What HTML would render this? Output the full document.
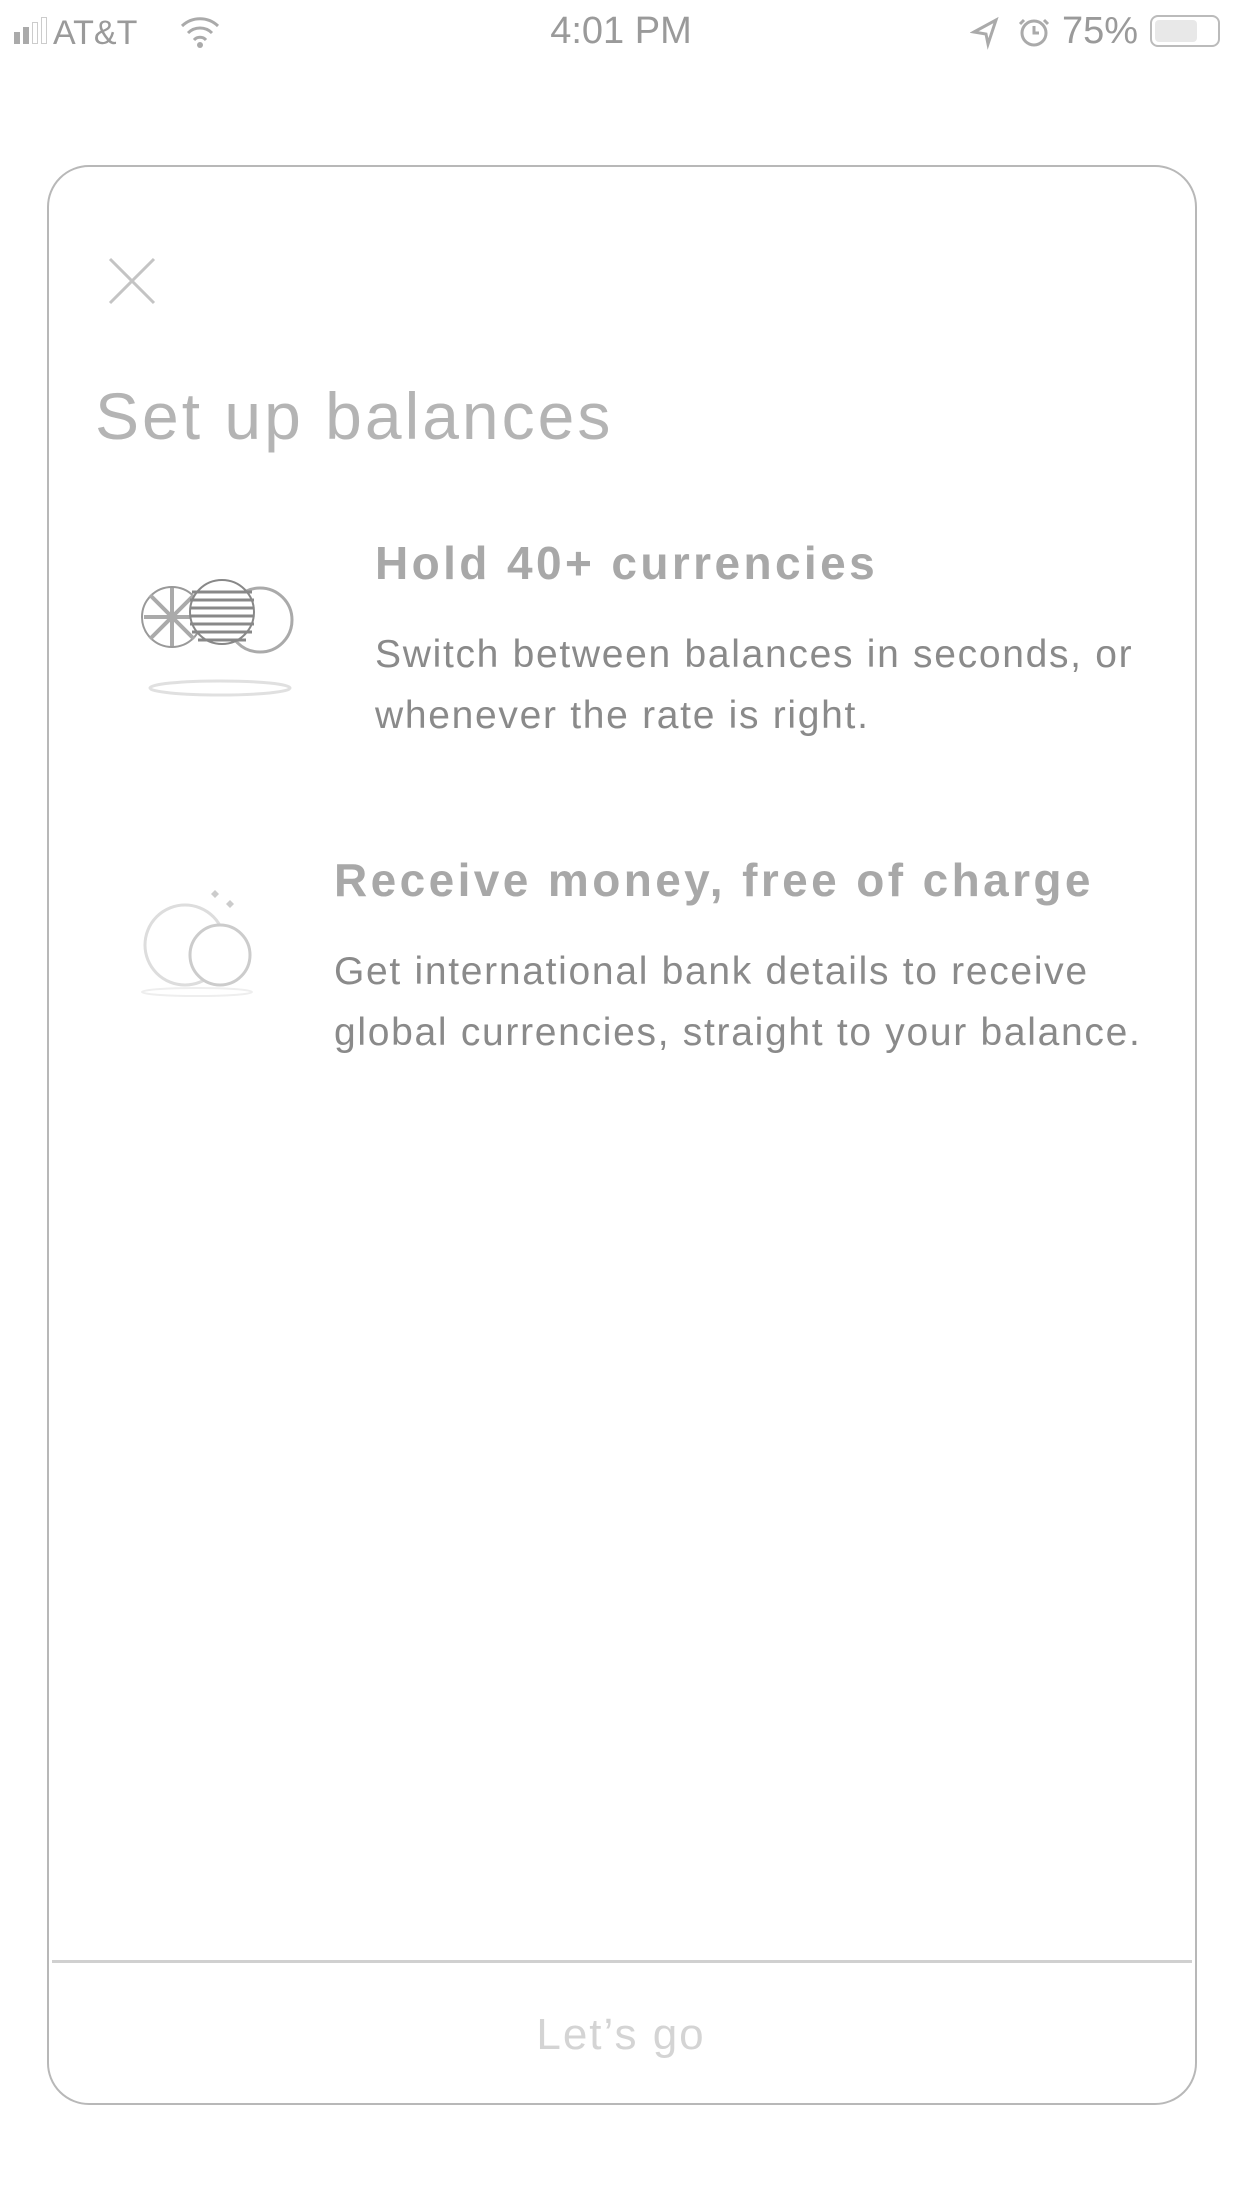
<!DOCTYPE html>
<html><head><meta charset="utf-8"><style>
body{margin:0;width:1242px;height:2208px;background:#fff;position:relative;overflow:hidden;font-family:"Liberation Sans",sans-serif;}
.a{position:absolute;white-space:nowrap;}
.card{position:absolute;left:47px;top:165px;width:1150px;height:1940px;border:2px solid #b8b8b8;border-radius:42px;box-sizing:border-box;}
.div{position:absolute;left:52px;top:1960px;width:1140px;height:3px;background:#d0d0d0;}
.h{font-weight:bold;font-size:46px;letter-spacing:3.4px;color:#a8a8a8;}
.d{font-size:39px;letter-spacing:1.7px;color:#8a8a8a;line-height:61px;}
</style></head><body>
<div class="a" style="left:14px;top:14px;font-size:34px;color:#9a9a9a;">
<span style="display:inline-block;width:6px;height:12px;background:#aaa;margin-right:3px"></span><span style="display:inline-block;width:6px;height:17px;background:#aaa;margin-right:3px"></span><span style="display:inline-block;width:6px;height:22px;border:1px solid #ccc;margin-right:3px;box-sizing:border-box"></span><span style="display:inline-block;width:6px;height:27px;border:1px solid #ccc;box-sizing:border-box;margin-right:6px"></span>AT&amp;T</div>
<svg class="a" style="left:178px;top:14px" width="44" height="36" viewBox="0 0 44 36"><path d="M4 12 A26 26 0 0 1 40 12 M10 19 A17 17 0 0 1 34 19 M16 26 A8 8 0 0 1 28 26" stroke="#aaa" stroke-width="3" fill="none"/><circle cx="22" cy="31" r="3" fill="#aaa"/></svg>
<div class="a" style="left:0;width:1242px;text-align:center;top:10px;font-size:38px;color:#9a9a9a;">4:01 PM</div>
<svg class="a" style="left:970px;top:14px" width="80" height="36" viewBox="0 0 80 36"><path d="M4 18 L26 6 L18 30 L16 20 Z" fill="none" stroke="#aaa" stroke-width="3"/><circle cx="64" cy="19" r="12" fill="none" stroke="#aaa" stroke-width="3"/><path d="M64 12V19H69M54 6l-4 4M74 6l4 4" stroke="#aaa" stroke-width="3" fill="none"/></svg>
<div class="a" style="left:1062px;top:10px;font-size:38px;color:#9a9a9a;">75%</div>
<div class="a" style="left:1150px;top:15px;width:70px;height:32px;border:2px solid #bbb;border-radius:8px;box-sizing:border-box"><div style="margin:3px;width:42px;height:22px;background:#e8e8e8;border-radius:4px"></div></div>
<div class="card"></div>
<div class="div"></div>
<svg class="a" style="left:108px;top:257px" width="48" height="48" viewBox="0 0 48 48"><path d="M2 2 L46 46 M46 2 L2 46" stroke="#c4c4c4" stroke-width="3"/></svg>
<div class="a" style="left:95px;top:378px;font-size:66px;letter-spacing:3px;color:#b4b4b4;">Set up balances</div>
<svg class="a" style="left:140px;top:570px" width="165" height="130" viewBox="0 0 165 130">
<circle cx="32" cy="47" r="30" fill="none" stroke="#999" stroke-width="2"/><path d="M4 47H60M32 18V76M10 25L54 69M54 25L10 69" stroke="#aaa" stroke-width="4"/>
<circle cx="120" cy="50" r="32" fill="none" stroke="#aaa" stroke-width="3"/>
<circle cx="82" cy="42" r="32" fill="#fff" stroke="#888" stroke-width="2"/>
<path d="M52 22H112M50 30H114M50 38H114M50 46H114M50 54H114M52 62H112M58 70H106" stroke="#888" stroke-width="3"/>
<ellipse cx="80" cy="118" rx="70" ry="7" fill="none" stroke="#e0e0e0" stroke-width="3"/></svg>
<svg class="a" style="left:135px;top:880px" width="125" height="120" viewBox="0 0 125 120">
<circle cx="50" cy="65" r="40" fill="none" stroke="#ddd" stroke-width="3"/><circle cx="85" cy="75" r="30" fill="#fff" stroke="#ccc" stroke-width="3"/>
<path d="M80 10l4 4-4 4-4-4zM95 20l4 4-4 4-4-4z" fill="#ccc"/><ellipse cx="62" cy="112" rx="55" ry="4" fill="none" stroke="#eee" stroke-width="2"/></svg>
<div class="a h" style="left:375px;top:536px;">Hold 40+ currencies</div>
<div class="a d" style="left:375px;top:624px;">Switch between balances in seconds, or<br>whenever the rate is right.</div>
<div class="a h" style="left:334px;top:853px;">Receive money, free of charge</div>
<div class="a d" style="left:334px;top:941px;">Get international bank details to receive<br>global currencies, straight to your balance.</div>
<div class="a" style="left:0;width:1242px;text-align:center;top:2010px;font-size:44px;letter-spacing:2px;color:#d4d4d4;">Let’s go</div>
</body></html>
